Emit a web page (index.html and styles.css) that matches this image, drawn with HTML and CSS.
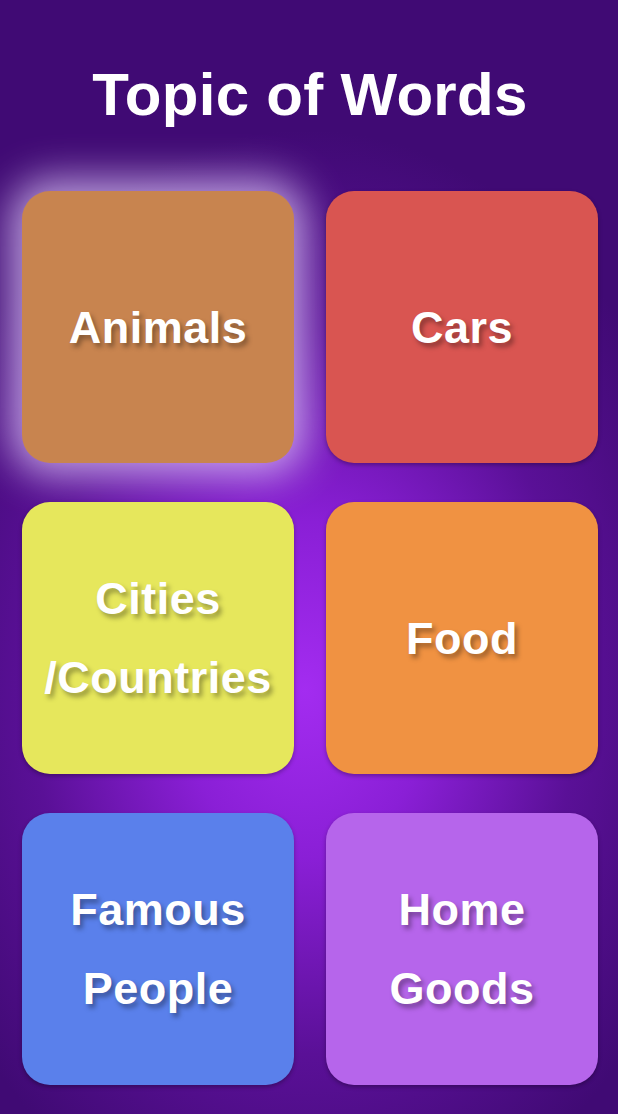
FILE: index.html
```html
<!DOCTYPE html>
<html>
<head>
<meta charset="utf-8">
<link rel="stylesheet" href="styles.css">
</head>
<body>
<div class="screen">
  <h1 class="title">Topic of Words</h1>
  <div class="grid">
    <div class="tile animals selected"><span>Animals</span></div>
    <div class="tile cars"><span>Cars</span></div>
    <div class="tile cities"><span>Cities<br>/Countries</span></div>
    <div class="tile food"><span>Food</span></div>
    <div class="tile famous"><span>Famous<br>People</span></div>
    <div class="tile home"><span>Home<br>Goods</span></div>
  </div>
</div>
</body>
</html>
```
FILE: styles.css
```css
html, body {
  margin: 0;
  padding: 0;
}
body {
  width: 618px;
  height: 1114px;
  overflow: hidden;
  font-family: "Liberation Sans", Arial, sans-serif;
}
.screen {
  width: 618px;
  height: 1114px;
  background: radial-gradient(ellipse 420px 560px at 305px 690px, #a32cf0 0%, #8a1fd6 30%, #5a1097 65%, #400a74 100%);
  display: flex;
  flex-direction: column;
}
.title {
  margin: 60px 0 0;
  font-size: 60px;
  font-weight: bold;
  letter-spacing: 0.3px;
  line-height: 69px;
  color: #fff;
  text-align: center;
  padding-left: 2px;
}
.grid {
  margin-top: 62px;
  padding-left: 22px;
  display: grid;
  grid-template-columns: 272px 272px;
  grid-template-rows: 272px 272px 272px;
  column-gap: 32px;
  row-gap: 39px;
}
.tile {
  border-radius: 28px;
  display: flex;
  align-items: center;
  justify-content: center;
  text-align: center;
  color: #fff;
  font-size: 45px;
  font-weight: bold;
  letter-spacing: 0.5px;
  line-height: 79px;
  text-shadow: 3px 4px 5px rgba(0, 0, 0, 0.35);
  box-shadow: 0 2px 4px rgba(0, 0, 0, 0.3);
}
.selected {
  box-shadow: 0 0 40px 12px rgba(228, 208, 255, 0.75);
}
.animals { background: #c8844f; }
.cars { background: #d95551; }
.cities { background: #e6e75c; }
.food { background: #f09242; }
.famous { background: #5a80eb; }
.home { background: #b665eb; }
```
